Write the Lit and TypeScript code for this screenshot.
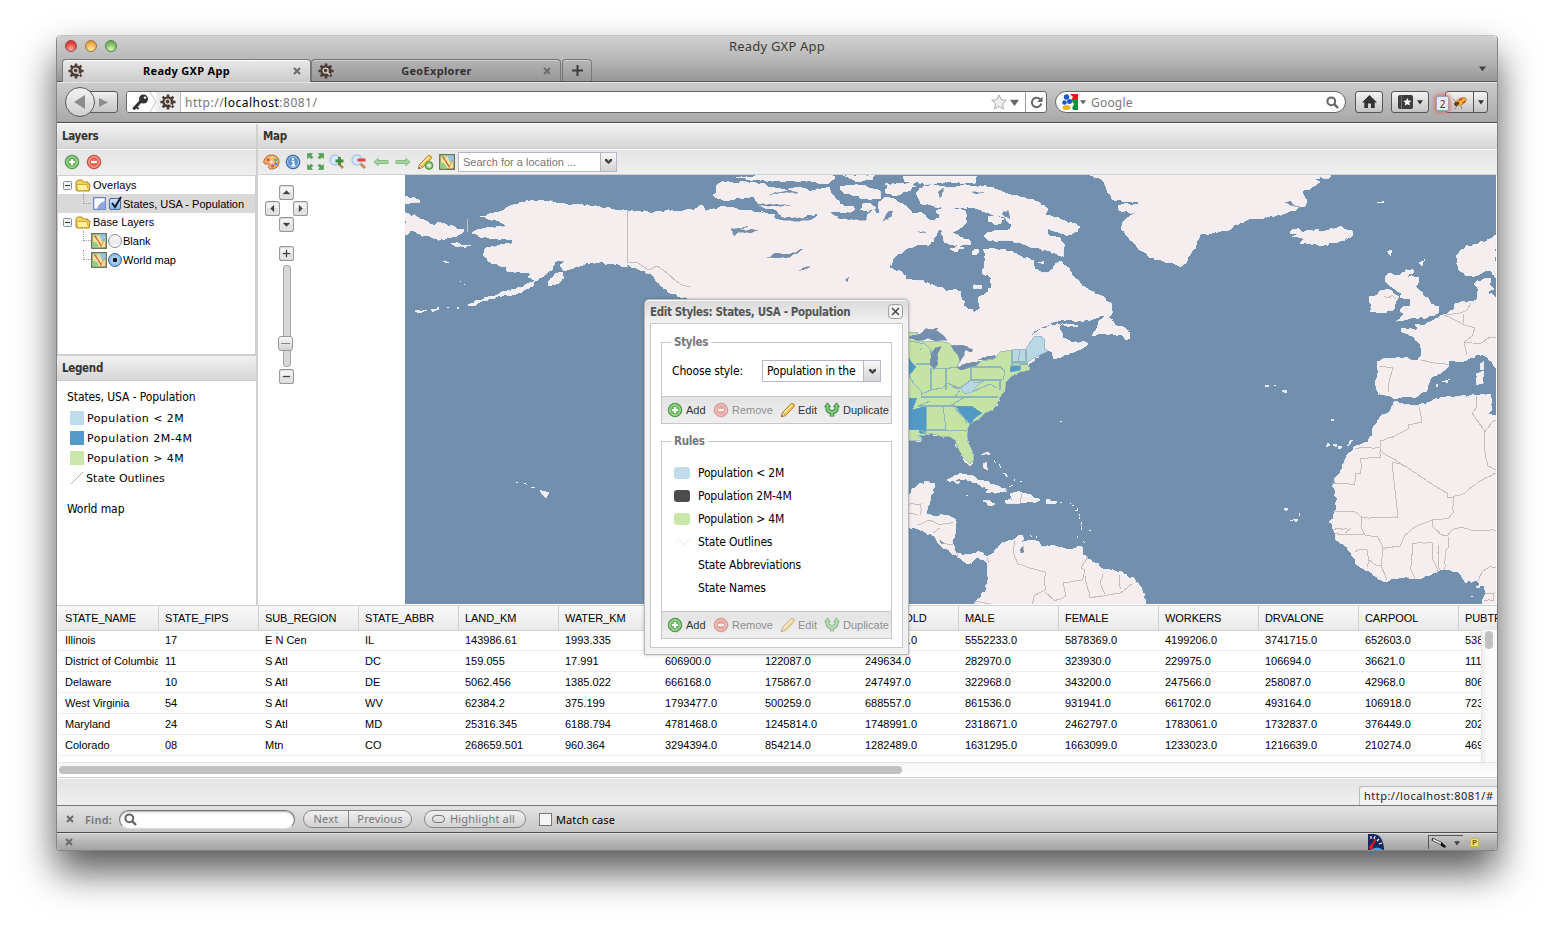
import { LitElement, html, css, svg, nothing } from "lit";
import { customElement } from "lit/decorators.js";

/* ---------- map geometry ---------- */

const LAND: string[] = [
  "405,197 419,200 420,202 405,203",
  "405,212 417,217 428,222 434,227 437,223 447,225 455,227 464,230 457,236 448,237 444,240 433,238 420,234 410,231 405,235",
  "451,243 460,244 471,246 465,248 455,246",
  "443,261 449,262 447,263",
  "548,282 555,274 563,272 564,278 556,284 549,286",
  "415,311 424,310 427,311 418,313", "431,310 438,307 439,309 432,311", "447,308 449,307", "457,307 459,307 458,309", "460,281 461,282", "464,284 465,285",
  "468,305 475,301 488,297 500,293 520,288 535,281 533,286 520,293 500,296 482,301 470,306",
  // North America mainland
  "480,217 492,214 505,209 510,206 522,202 534,201 550,201 565,204 580,205 600,207 615,210 627,211 640,211 653,213 665,211 680,211 695,209 700,205 707,211 718,208 724,206 735,209 750,211 763,213 775,214 775,219 800,219 812,220 822,213 832,214 838,217 850,218 866,220 868,214 872,211 880,213 879,202 885,197 893,198 900,203 906,206 912,213 921,212 928,219 934,221 940,217 936,211 945,207 955,209 965,211 967,221 960,228 955,231 950,231 960,237 970,241 970,245 955,246 945,243 943,236 940,229 936,236 930,244 915,246 905,250 895,257 890,268 902,272 906,280 920,281 935,286 945,290 960,291 962,300 966,307 974,313 981,308 978,298 988,292 992,285 990,277 982,273 985,265 986,255 983,249 1000,250 1012,251 1022,257 1034,260 1035,269 1045,273 1053,269 1057,263 1061,261 1070,271 1078,280 1085,287 1095,294 1105,298 1112,305 1112,313 1100,316 1083,322 1070,320 1058,321 1050,324 1042,327 1034,331 1030,336 1040,330 1052,325 1062,324 1060,330 1062,338 1072,343 1085,342 1088,344 1080,350 1070,353 1060,358 1054,359 1053,352 1048,350 1042,353 1035,358 1028,365 1030,370 1020,372 1012,376 1006,382 1005,390 1000,397 998,402 993,410 985,413 980,418 970,424 967,430 967,440 972,450 974,460 970,466 963,457 958,448 955,440 948,436 940,436 930,433 925,435 918,436 922,440 908,441 860,445 700,445 700,310 692,299 680,297 668,292 660,285 652,275 640,270 630,266 615,265 600,262 585,264 570,269 563,270 560,265 568,259 555,262 552,270 545,275 535,281 528,277 532,272 520,272 507,271 507,266 500,266 490,262 483,255 487,247 497,246 512,243 513,239 492,239 480,237 472,233 482,229 490,228 508,227 500,222 490,219",
  "1092,335 1098,325 1105,315 1113,312 1108,317 1113,321 1115,325 1125,328 1129,332 1130,338 1126,340 1122,335 1110,334",
  "1062,323 1072,324 1078,326 1070,326",
  "1075,343 1084,341 1088,344 1082,347 1076,346",
  // Arctic archipelago
  "714,196 716,188 720,183 740,182 760,184 775,188 785,190 800,187 812,192 813,198 812,190 830,188 833,195 840,204 855,209 850,213 838,211 828,214 815,214 800,218 783,217 776,210 765,208 758,203 752,196 745,197 740,198 728,201",
  "736,177 765,176 790,179 780,181 750,180",
  "760,175 830,175 835,177 828,184 812,182 795,181 775,179",
  "840,186 850,185 863,186 880,191 880,199 870,200 850,194 843,192",
  "843,175 875,175 872,180 855,181",
  "903,176 977,176 976,182 930,183 905,182",
  "885,184 912,184 916,187 905,191 895,196 885,192 888,188",
  "862,205 870,203 876,208 868,212 860,210",
  "917,192 920,188 930,185 945,187 960,186 975,186 990,187 1005,193 1020,197 1035,201 1048,209 1045,214 1060,219 1080,227 1077,232 1067,236 1058,232 1047,229 1048,234 1060,238 1064,244 1062,257 1050,251 1035,248 1020,242 1005,240 990,241 984,236 990,232 1003,230 1010,229 1012,224 1006,219 1015,221 1002,217 985,212 975,208 955,208 935,207 920,203",
  "950,249 960,247 964,248 955,252", "972,252 978,249 978,253 973,255", "973,286 981,285 981,289 974,289",
  "988,217 996,214 1004,219 998,224 989,222", "1038,262 1044,261 1043,264",
  // Greenland
  "1090,175 1103,181 1107,190 1112,199 1117,200 1138,202 1138,205 1125,203 1118,206 1119,210 1128,212 1137,214 1130,216 1123,222 1122,230 1130,240 1142,251 1155,260 1170,262 1180,267 1184,264 1190,255 1196,245 1200,235 1212,233 1225,231 1240,222 1255,219 1275,216 1290,211 1305,206 1307,200 1303,191 1312,187 1320,182 1313,178 1330,177 1330,175",
  "1290,232 1298,228 1302,232 1310,230 1325,231 1342,227 1352,231 1353,235 1345,240 1335,243 1322,246 1310,243 1300,243 1306,238 1292,237 1297,235",
  "1377,203 1384,201 1383,203", "1387,251 1392,250 1391,256", "1419,263 1425,259 1422,266",
  "1386,282 1386,276 1391,273 1395,276 1405,272 1412,269 1414,271 1407,277 1419,277 1415,286 1422,292 1428,298 1431,304 1439,306 1438,313 1428,317 1416,318 1405,319 1396,322 1404,314 1400,311 1403,307 1410,306 1410,299 1400,298 1402,293 1396,290 1388,284",
  "1369,297 1375,296 1380,291 1390,290 1398,296 1395,304 1393,310 1380,313 1370,312 1372,305",
  "1496,235 1487,241 1475,244 1462,249 1457,255 1458,268 1465,275 1475,276 1485,271 1492,272 1496,278",
  // continental Europe
  "1475,283 1484,279 1491,279 1489,285 1494,289 1488,292 1496,298 1496,368 1488,358 1478,354 1467,360 1460,361 1449,361 1448,367 1438,374 1430,380 1427,390 1418,396 1402,397 1396,399 1390,396 1378,395 1375,385 1379,372 1377,361 1385,358 1400,358 1418,360 1421,356 1421,345 1412,336 1402,332 1401,329 1418,329 1415,325 1425,325 1435,319 1443,315 1453,310 1456,303 1465,302 1478,299 1478,291",
  "1480,364 1484,361 1483,370 1480,369", "1476,374 1484,371 1483,383 1477,385", "1442,381 1450,379 1447,383", "1436,385 1438,384 1437,387",
  // Africa
  "1394,402 1400,404 1410,405 1418,406 1430,402 1440,398 1455,397 1475,396 1490,394 1492,400 1492,410 1488,414 1496,416 1496,604 1483,604 1485,590 1477,581 1465,582 1458,572 1450,570 1440,570 1430,575 1418,579 1405,577 1393,578 1385,582 1370,572 1355,563 1352,553 1345,546 1336,540 1334,531 1333,525 1329,522 1335,513 1337,500 1335,490 1332,486 1340,471 1345,463 1347,455 1353,450 1358,445 1368,442 1373,435 1373,428 1380,417 1390,411",
  "1326,447 1328,443 1330,445", "1333,445 1336,444 1336,447", "1338,446 1342,447 1339,449", "1347,446 1350,441 1353,440 1350,444", "1331,420 1334,419 1333,421",
  "1265,386 1269,385 1268,387", "1274,385 1276,386", "1282,391 1286,390 1286,393", "1284,508 1288,509 1286,511", "1290,521 1293,520", "1293,519 1298,519 1296,522", "1299,513 1300,516", "1476,587 1480,585 1479,588", "1471,596 1473,597",
  // Caribbean and the south
  "947,480 955,475 965,474 975,477 985,482 995,485 1007,491 1000,492 986,493 990,489 980,485 970,480 960,479 950,482",
  "955,482 960,482 957,484",
  "1005,500 1013,501 1010,494 1020,492 1030,494 1040,500 1035,503 1020,503 1006,503",
  "1046,500 1057,501 1055,504 1046,503", "983,501 990,501 995,504 988,505",
  "981,455 986,452 990,455 987,454", "983,464 986,462 988,470 984,468", "994,460 996,463", "999,464 1001,468", "1003,473 1008,477", "1009,487 1013,485", "1014,479 1015,481", "1020,481 1022,482",
  "1060,503 1062,502", "1070,503 1071,504", "1072,505 1074,506", "1075,511 1078,510", "1077,508 1078,511", "1079,514 1080,516", "1079,517 1080,519", "1081,522 1082,525", "1081,526 1082,530", "1077,536 1078,538", "1089,530 1091,531", "1083,541 1085,543",
  "1030,535 1032,537", "1036,536 1037,538", "966,495 968,496",
  "1060,421 1062,422", "516,482 518,483", "524,483 527,485", "531,487 535,487", "540,490 549,493 546,498 542,494",
  "908,500 912,489 920,483 934,483 935,487 930,497 927,510 926,514 935,517 945,515 955,519 955,530 952,542 957,554 968,555 980,552 988,557 995,550 1000,545 1010,540 1022,535 1024,538 1017,545 1025,541 1030,540 1036,541 1042,547 1055,546 1070,549 1082,547 1083,555 1095,563 1105,570 1122,572 1135,580 1142,590 1146,600 1145,604 974,604 985,592 988,580 988,568 985,561 978,557 970,564 958,557 950,552 940,545 935,537 920,530 908,527 890,515 880,490",
];

const WATER: string[] = [
  "908,337 920,334 925,329 937,331 945,337 947,341 935,341 928,338 918,341",
  "941,346 935,348 931,355 930,365 934,369 938,364 937,355",
  "951,346 960,345 965,346 972,349 972,352 965,350 964,356 960,362 957,354",
  "957,367 965,364 980,361 975,366 962,370",
  "978,359 995,355 995,358 982,360",
  "731,229 742,229 748,226 740,230 758,230 750,233 738,232 734,236",
  "767,258 775,253 790,254 803,249 790,257 775,258",
  "799,271 810,267 803,268", "845,280 849,277 848,282", "883,221 888,212 893,211 892,216",
  "837,217 850,215 866,217 866,220 842,219", "774,217 790,218 812,219 800,221 783,220",
  "927,330 938,328 936,331", "1285,202 1290,201 1294,206 1303,207 1290,205",
  "1020,549 1023,546 1024,552 1021,553", "920,350 922,348", "940,540 944,543 941,543",
  "938,192 944,188 940,198", "972,192 984,193 976,194", "848,213 858,210 864,213 856,217",
  "1002,214 1008,210 1010,219 1004,216", "755,204 790,205 770,206", "770,194 790,190 798,193 792,192", "918,231 926,233 920,233",
];

const BORDERS: string[] = [
  "627,210 627,262 637,262 648,270 657,266 667,273 680,284 690,287",
  "1332,484 1355,484 1355,474 1361,473 1361,458 1380,458 1380,448 1355,448",
  "1380,448 1380,441 1395,436 1408,429 1408,425 1422,422 1419,407",
  "1380,451 1400,463 1435,486 1447,493 1448,498 1463,494 1478,482 1496,473",
  "1400,463 1392,463 1398,517 1363,518 1355,512 1345,511 1335,512",
  "1453,497 1453,513 1449,518 1432,520 1415,527 1405,535 1400,546 1383,548",
  "1432,520 1433,527 1440,534 1447,536 1452,530 1460,527 1475,531 1496,530",
  "1449,537 1449,545 1445,553 1445,570", "1432,543 1413,543 1411,570 1415,579", "1432,543 1433,560 1438,571", "1438,545 1439,570",
  "1383,548 1381,565 1387,580", "1361,518 1361,527 1365,535 1378,537 1383,548", "1333,529 1350,529 1345,533", "1335,534 1363,535",
  "1355,552 1360,549 1367,550 1369,560 1376,565 1382,566", "1369,560 1367,567",
  "1476,396 1476,408 1472,413 1484,430 1485,455 1488,466 1496,470", "1484,433 1492,422 1496,420",
  "1478,581 1482,572 1490,566 1496,568", "1485,593 1494,593 1494,600 1484,600",
  "1379,366 1393,368 1390,378 1388,392", "1421,360 1435,363 1448,364", "1444,315 1455,320 1465,325 1475,328 1472,336 1464,342 1467,355", "1447,315 1460,313 1467,310 1471,303", "1464,342 1480,344 1490,337 1496,337", "1463,314 1464,323", "1384,296 1388,298 1392,295 1396,299",
  "1015,541 1013,552 1018,564 1030,568 1045,572 1045,590 1035,595 1032,604", "1045,592 1055,601 1066,596 1063,583 1082,580 1085,570 1081,568 1088,557", "1085,576 1090,598 1108,595 1120,593 1132,584", "1103,574 1100,583 1105,594", "1120,575 1120,590",
  "1021,494 1021,503", "908,504 921,504 921,515", "908,514 918,514", "918,525 930,520 940,525 953,522", "933,533 940,528", "941,543 953,545", "957,552 957,558", "987,558 989,563", "974,601 990,604",
];

const STATE_LINES: string[] = [
  "916,364 931,364", "931,368 931,390", "946,368 946,390", "933,369 950,368 972,367", "971,367 971,380 1002,380",
  "971,367 1001,367 1005,372 1003,380", "1012,350 1012,366 1027,364", "1020,350 1018,362", "1012,362 1026,362", "1026,350 1026,364",
  "908,374 914,384 921,391 922,396", "922,394 931,390 942,388 948,383 955,388 960,388", "946,383 960,388 971,380",
  "960,390 955,397", "921,397 998,397", "918,406 950,406 956,406", "950,406 965,397", "927,406 926,433", "943,406 946,430", "926,430 946,430 966,431",
  "921,430 926,434", "972,392 983,387 990,384 997,388", "983,381 1000,380 1000,390", "910,341 925,344 931,350 931,355", "953,406 965,419 967,424", "930,401 918,406",
];

const EAST =
  "880,332 908,332 918,333 910,338 925,342 938,341 948,343 953,346 957,354 961,359 957,367 965,369 975,366 982,361 994,359 1000,352 1012,350 1026,350 1027,362 1030,370 1020,372 1012,376 1006,382 1005,390 1000,397 998,402 993,410 985,413 980,418 970,424 967,430 967,440 972,450 974,460 970,464 963,457 958,448 955,440 948,436 940,436 930,433 925,435 918,436 922,440 880,441";

const PALE = [
  "1012,350 1026,349 1030,342 1034,337 1041,336 1044,339 1045,349 1048,351 1040,355 1032,359 1026,363 1012,363",
  "960,388 965,384 972,380 975,383 983,381 977,386 972,392 965,394",
];

const BLUE = [
  "1011,366 1021,366 1020,370 1010,372",
  "956,406 971,406 982,413 975,418 970,424 965,418 960,412",
  "900,399 917,398 912,410 927,406 926,433 920,433 919,430 900,429",
  "900,355 909,358 911,362 916,367 910,374 900,374",
];

type Pt = [number, number];

const toPoints = (s: string): Pt[] =>
  s.split(" ").map((p) => p.split(",").map(Number) as Pt);

/** Breaks straight coast segments into a ragged, repeatable shoreline. */
function coast(src: string, closed = true, amount = 1.3): string {
  const pts = toPoints(src);
  let seed = pts[0][0] * 31 + pts[0][1] * 17;
  const rnd = () => {
    seed = (seed * 1103515245 + 12345) % 2147483648;
    return seed / 2147483648 - 0.5;
  };
  const out: Pt[] = [];
  const n = closed ? pts.length : pts.length - 1;
  for (let i = 0; i < n; i++) {
    const a = pts[i];
    const b = pts[(i + 1) % pts.length];
    out.push(a);
    const len = Math.hypot(b[0] - a[0], b[1] - a[1]);
    if (len > 50) continue;
    const steps = Math.floor(len / 2.4);
    for (let k = 1; k < steps; k++) {
      const t = k / steps;
      out.push([
        a[0] + (b[0] - a[0]) * t + rnd() * amount * 2,
        a[1] + (b[1] - a[1]) * t + rnd() * amount * 2,
      ]);
    }
  }
  if (!closed) out.push(pts[pts.length - 1]);
  return (
    "M" + out.map((p) => p[0].toFixed(1) + " " + p[1].toFixed(1)).join("L") + (closed ? "Z" : "")
  );
}

const plain = (s: string, closed = true) => "M" + s.replace(/ /g, "L") + (closed ? "Z" : "");

@customElement("world-map")
class WorldMap extends LitElement {
  static styles = css`
    :host { display: block; }
    svg { display: block; width: 100%; height: 100%; }
    .sea { fill: #7290ad; }
    .land { fill: #f6edee; stroke: #eef2fa; stroke-width: 0.9; }
    .lake { fill: #7290ad; stroke: #7f93aa; stroke-width: 0.5; }
    .border { fill: none; stroke: #c9bcbf; stroke-width: 1; }
    .green { fill: #c4e3a4; stroke: #90b5b0; stroke-width: 0.8; }
    .pale { fill: #bad7e6; stroke: #8db2cd; stroke-width: 0.8; }
    .blue { fill: #5299c6; stroke: #5f9fc8; stroke-width: 0.8; }
    .line { fill: none; stroke: #8fb6bb; stroke-width: 1.1; }
  `;
  render() {
    return html`<svg viewBox="405 175 1091 429" preserveAspectRatio="none" shape-rendering="crispEdges">
      <rect class="sea" x="405" y="175" width="1092" height="430"></rect>
      ${LAND.map((l) => svg`<path class="land" d=${coast(l)}></path>`)}
      <path class="border" d="M467 219V232" stroke-width="2"></path>
      ${BORDERS.map((l) => svg`<path class="border" d=${coast(l, false, 0.35)}></path>`)}
      <path class="green" d=${plain(EAST)}></path>
      ${PALE.map((l) => svg`<path class="pale" d=${plain(l)}></path>`)}
      ${BLUE.map((l) => svg`<path class="blue" d=${plain(l)}></path>`)}
      ${STATE_LINES.map((l) => svg`<path class="line" d=${plain(l, false)}></path>`)}
      ${WATER.map((l) => svg`<path class="lake" d=${coast(l, true, 0.7)}></path>`)}
    </svg>`;
  }
}

/* ---------- icons ---------- */

const frame = (w: number, h: number, body: unknown) =>
  html`<svg class="ico" width=${w} height=${h} viewBox="0 0 ${w} ${h}">${body}</svg>`;

const add = () => frame(16, 16, svg`
  <circle cx="8" cy="8" r="6.8" fill="#4ea24b" stroke="#3f8a3d" stroke-width=".8"/>
  <circle cx="8" cy="8" r="5.3" fill="#69bb5c" stroke="#cdeac8" stroke-width=".9"/>
  <path d="M8 5v6M5 8h6" stroke="#fff" stroke-width="2.2"/>`);
const remove = () => frame(16, 16, svg`
  <circle cx="8" cy="8" r="6.8" fill="#d9453a" stroke="#c63c33" stroke-width=".8"/>
  <circle cx="8" cy="8" r="5.3" fill="#ea6355" stroke="#f8c9c3" stroke-width=".9"/>
  <path d="M5 8h6" stroke="#fff" stroke-width="2.2"/>`);
const pencil = (plus = false) => frame(17, 16, svg`
  <path d="M1.5 14.5l1-4L11 1.8q1.3-1 2.7.2 1.300 1.200.3 2.700L5.500 13.500z" fill="#f5c44c" stroke="#b57b22"/>
  <path d="M4 11l8-8" stroke="#fdeea8" stroke-width="1.600"/>
  <path d="M1.500 14.500l1-4 3 3z" fill="#f7e3c4" stroke="#b98a4a" stroke-width=".7"/>
  <path d="M1.200 14.800l.6-2 1.400 1.400z" fill="#4a3a22"/>
  ${plus ? svg`<circle cx="12" cy="11.500" r="3.900" fill="#8cc86a" stroke="#4c8f3a"/><path d="M12 9.500v4M10 11.500h4" stroke="#fff" stroke-width="1.400"/>` : nothing}`);
const fork = () => frame(16, 16, svg`
  <path d="M8 14.500V11" stroke="#3d9148" stroke-width="4.400"/>
  <path d="M3.500 4v2.500q0 3.500 4.500 3.500t4.500-3.500V4" fill="none" stroke="#3d9148" stroke-width="4.200"/>
  <path d="M.5 4.800L3.500.8l3 4zM9.500 4.800l3-4 3 4z" fill="#5fb45f" stroke="#3d9148" stroke-width=".8"/>
  <path d="M8 14V10.500M3.500 3v3.500q0 3.500 4.500 3.500t4.500-3.500V3" fill="none" stroke="#86cc7e" stroke-width="2"/>`);
const palette = () => frame(17, 16, svg`
  <path d="M8.500 1C13 .8 16 3.800 16 8c0 4-3 7-7.500 7-3.500 0-3.600-2.300-2.500-3.500S4.500 9.500 3 10C.8 10.300.3 8 1.200 6 2.500 2.700 5.300 1.100 8.500 1z" fill="#efb07a" stroke="#b5622d"/>
  <circle cx="5" cy="5.800" r="1.600" fill="#e9553f"/><circle cx="9" cy="4" r="1.500" fill="#f3dd51"/><circle cx="12.700" cy="6" r="1.500" fill="#5cb85a"/><circle cx="13" cy="10" r="1.600" fill="#4f8ed8"/><circle cx="9.500" cy="12" r="1.500" fill="#d6553c"/><circle cx="8.500" cy="8" r="1.300" fill="#fff4e2"/>`);
const info = () => frame(16, 16, svg`
  <circle cx="8" cy="8" r="6.900" fill="#4679b9" stroke="#2d5c9c" stroke-width=".8"/>
  <circle cx="8" cy="8" r="5.500" fill="#5f93cf" stroke="#b9d2ee" stroke-width=".9"/>
  <path d="M8 4v2M6.500 7.500H8.600v4M6.300 11.700h4" stroke="#fff" stroke-width="1.700" fill="none"/>`);
const extent = () => frame(17, 17, svg`
  <g fill="#52a552" stroke="#3f8b41" stroke-width=".5"><path d="M.5.500h5L4 2.200l2 2L4.300 5.900l-2-2L.5 5.500z"/><path d="M16.500.500v5L14.800 4l-2 2L11 4.300l2-2L11.500.500z"/><path d="M.5 16.500v-5L2.200 13l2-2L6 12.700l-2 2 1.500 1.800z"/><path d="M16.500 16.500h-5l1.500-1.800-2-2L12.700 11l2 2 1.800-1.500z"/></g>`);
const zoomIcon = (plus: boolean) => frame(16, 16, svg`
  <path d="M9.500 9.500l4.500 4.500" stroke="#c78a4b" stroke-width="2.600"/>
  <circle cx="6" cy="6" r="5" fill="#d8e9fb" stroke="#a9c6ea" stroke-width="1.300"/>
  ${plus ? svg`<path d="M10.500 3v8M6.500 7h8" stroke="#3c8c3c" stroke-width="2.800"/>` : svg`<path d="M6.500 6h8" stroke="#e8433f" stroke-width="3"/>`}`);
const arrow = (left: boolean) => frame(16, 16, svg`
  <path transform=${left ? "" : "matrix(-1 0 0 1 16 0)"} d="M1 8l4.200-3.500v2H15v3H5.200v2z" fill="#a6d3a1" stroke="#7fb47d" stroke-width=".9"/>`);
const mapIcon = () => frame(16, 16, svg`
  <rect x=".8" y=".8" width="14.400" height="14.400" fill="#f3e396" stroke="#5c6a4e" stroke-width="1.400"/>
  <path d="M8 1.500h6.500v7L11 8z" fill="#8fc7ec"/><path d="M1.500 8L6 10l2 4.500H1.500z" fill="#93cc8a"/><path d="M1.500 3l3-1.500h4l-3 4z" fill="#b8d8a0"/>
  <path d="M3.500 2.500l3.500 5 3.500 6" stroke="#d64b36" stroke-width="1.200" fill="none"/><path d="M10 13l3.500-7" stroke="#e0993f"/>`);
const folder = () => frame(16, 13, svg`
  <path d="M1 11V3l1.500-2H7l1.500 2H13v2h2l-.8 7H2.300z" fill="#f3d35f" stroke="#b48a1e"/>
  <path d="M2.500 11.500L1.600 5.500H12l1.500 6z" fill="#fdf0a2" stroke="#c79d2c" stroke-width=".8"/>`);
const gear = () => frame(16, 16, svg`
  <g stroke="#4b3c35" stroke-width="2.600"><path d="M8 .4v15.200M.4 8h15.200M2.600 2.600l10.800 10.800M13.400 2.600L2.600 13.400"/></g>
  <circle cx="8" cy="8" r="5.700" fill="#4b3c35"/><circle cx="7.600" cy="7.600" r="2.500" fill="none" stroke="#d8cfca" stroke-width="1.400"/><path d="M9.500 9.500l2.500 2.500" stroke="#d8cfca" stroke-width="1.600"/>`);
const cross = () => frame(8, 8, svg`<path d="M1 1l6 6M7 1L1 7" stroke="#6b6b6b" stroke-width="2"/>`);
const tri = (w: number, c: string) => html`<svg class="ico" width=${w} height=${w} viewBox="0 0 10 10"><path d="M0 2h10L5 9z" fill=${c}/></svg>`;
const magnifier = () => frame(13, 13, svg`<circle cx="5.300" cy="5.300" r="3.900" fill="none" stroke="#666" stroke-width="2"/><path d="M8.200 8.200L12 12" stroke="#666" stroke-width="2.400"/>`);
const nudge = (d: string) => frame(15, 15, svg`<rect x=".6" y=".6" width="13.800" height="13.800" rx="2" fill="#f4f4f4" stroke="#969696" stroke-width="1.100"/><rect x="2" y="7" width="11" height="6" fill="#e2e2e2"/><path d=${d} fill="#444" stroke="#444" stroke-width=".3"/>`);

/* ---------- data ---------- */

const COLUMNS = ["STATE_NAME", "STATE_FIPS", "SUB_REGION", "STATE_ABBR", "LAND_KM", "WATER_KM", "PERSONS", "FAMILIES", "HOUSHOLD", "MALE", "FEMALE", "WORKERS", "DRVALONE", "CARPOOL", "PUBTRANS"];
const ROWS = [
  ["Illinois", "17", "E N Cen", "IL", "143986.61", "1993.335", "11430602.0", "2924880.0", "4202240.0", "5552233.0", "5878369.0", "4199206.0", "3741715.0", "652603.0", "538071.0"],
  ["District of Columbia", "11", "S Atl", "DC", "159.055", "17.991", "606900.0", "122087.0", "249634.0", "282970.0", "323930.0", "229975.0", "106694.0", "36621.0", "111422.0"],
  ["Delaware", "10", "S Atl", "DE", "5062.456", "1385.022", "666168.0", "175867.0", "247497.0", "322968.0", "343200.0", "247566.0", "258087.0", "42968.0", "8069.0"],
  ["West Virginia", "54", "S Atl", "WV", "62384.2", "375.199", "1793477.0", "500259.0", "688557.0", "861536.0", "931941.0", "661702.0", "493164.0", "106918.0", "7237.0"],
  ["Maryland", "24", "S Atl", "MD", "25316.345", "6188.794", "4781468.0", "1245814.0", "1748991.0", "2318671.0", "2462797.0", "1783061.0", "1732837.0", "376449.0", "202169.0"],
  ["Colorado", "08", "Mtn", "CO", "268659.501", "960.364", "3294394.0", "854214.0", "1282489.0", "1631295.0", "1663099.0", "1233023.0", "1216639.0", "210274.0", "46983.0"],
];

@customElement("app-root")
class AppRoot extends LitElement {
  static styles = css`
    :host { display: block; width: 1554px; height: 929px; box-sizing: border-box; padding: 35px 56px 0; background: #fff; overflow: hidden; font: 11px/14px "Liberation Sans", Arial, sans-serif; color: #000; }
    * { box-sizing: border-box; }
    .ico { display: block; flex: none; }
    .grow { flex: 1; }
    .win { position: relative; width: 1442px; height: 816px; display: flex; flex-direction: column; border-radius: 5px 5px 4px 4px; border: 1px solid #848484; border-top-color: #c4c4c4; box-shadow: 0 21px 38px rgba(0,0,0,.66); background: #eee; }
    .lucida { font-family: "Noto Sans", "Open Sans", sans-serif; }
    .tahoma { font-family: "DejaVu Sans Condensed", "DejaVu Sans", sans-serif; font-stretch: condensed; }

    .top { height: 46px; flex: none; background: linear-gradient(#d0d0d0, #b9b9b9 50%, #979797); border-bottom: 1px solid #555; border-radius: 5px 5px 0 0; display: flex; flex-direction: column; }
    .title { height: 23px; padding-bottom: 4px; display: grid; grid-template-columns: 1fr auto 1fr; align-items: center; }
    .lights { display: flex; gap: 8px; padding-left: 8px; }
    .light { width: 12px; height: 12px; border-radius: 50%; border: 1px solid; }
    .red { background: radial-gradient(circle at 50% 85%, #ffb4ad, #e8443f 60%, #c5312d); border-color: #a3433f; }
    .amber { background: radial-gradient(circle at 50% 85%, #ffefb0, #f0b04a 60%, #c98a3a); border-color: #a5743c; }
    .lime { background: radial-gradient(circle at 50% 85%, #d9f8c4, #7fbd68 60%, #5f964e); border-color: #56834c; }
    .name { font-size: 13px; color: #3b3b3b; letter-spacing: .2px; }
    .tabs { flex: 1; display: flex; padding-left: 5px; align-items: stretch; }
    .tab { width: 250px; display: flex; align-items: center; padding: 1px 9px 0 6px; border: 1px solid #777; border-bottom: 0; border-radius: 4px 4px 0 0; font-weight: 700; font-size: 11px; color: #333; letter-spacing: .3px; background: linear-gradient(#b4b4b4, #979797); box-shadow: inset 0 1px rgba(255,255,255,.35); }
    .tab.on { width: 249px; padding: 0 9px 0 5px; color: #000; background: linear-gradient(#e9e9e9, #cbcbcb); margin-bottom: -1px; box-shadow: inset 0 1px #fff; }
    .tab .label { flex: 1; text-align: center; padding-right: 4px; }
    .plus { width: 30px; margin-left: 1px; display: flex; align-items: center; justify-content: center; border: 1px solid #777; border-bottom: 0; border-radius: 4px 4px 0 0; box-shadow: inset 0 1px rgba(255,255,255,.35); }
    .tabmenu { margin: 6px 11px 0 auto; }

    .nav { height: 41px; flex: none; background: linear-gradient(#cbcbcb, #a8a8a8); border-top: 1px solid #e6e6e6; border-bottom: 1px solid #4d4d4d; display: flex; align-items: center; padding: 0 9px 1px 8px; }
    .back { width: 30px; height: 30px; border-radius: 50%; border: 1px solid #5a5a5a; background: linear-gradient(#f4f4f4, #cfcfcf); display: flex; align-items: center; justify-content: center; z-index: 1; }
    .fwd { width: 30px; height: 22px; margin-left: -7px; border: 1px solid #5a5a5a; border-radius: 0 3px 3px 0; background: linear-gradient(#efefef, #c4c4c4); display: flex; align-items: center; justify-content: center; }
    .url { width: 921px; height: 22px; margin-left: 8px; border: 1px solid #666; border-radius: 3px; background: #fff; display: flex; align-items: center; font-size: 12px; color: #777; }
    .url .dd { margin-left: 3px; }
    .ident { width: 54px; height: 20px; display: flex; align-items: center; padding-left: 5px; border-right: 1px solid #bbb; border-radius: 2px 0 0 2px; background: linear-gradient(90deg, #fff 27px, #ececec 31px); }
    .ident .chev { width: 11px; }
    .addr { flex: 1; padding: 2px 0 0 4px; letter-spacing: .5px; }
    .addr b { font-weight: 400; color: #000; }
    .reload { width: 21px; height: 20px; margin-left: 6px; border-left: 1px solid #999; display: flex; align-items: center; justify-content: center; }
    .search { width: 291px; height: 22px; margin-left: 8px; border: 1px solid #666; border-radius: 11px; background: #fff; display: flex; align-items: center; padding: 0 6px 0 6px; font-size: 12px; color: #777; letter-spacing: .2px; }
    .search .dd { margin-left: 2px; }
    .search .grow { padding: 2px 0 0 5px; }
    .btn { height: 22px; border: 1px solid #555; border-radius: 3px; background: linear-gradient(#f3f3f3, #c3c3c3); display: flex; align-items: center; justify-content: center; gap: 4px; }
    .home { width: 28px; margin-left: 9px; }
    .marks { width: 38px; margin-left: 8px; }
    .bug { width: 43px; margin-left: 16px; padding: 0 0 0 6px; justify-content: space-between; position: relative; }
    .bug .drop { border-left: 1px solid #555; height: 20px; width: 14px; display: flex; align-items: center; justify-content: center; }
    .badge { position: absolute; left: -10px; top: 4px; width: 13px; height: 15px; background: #e6ecf6; border: 1px solid #9aa3b5; border-radius: 2px; color: #b0000f; font-size: 10px; line-height: 14px; text-align: center; box-shadow: 0 0 4px 1px #e0605a; }

    .main { height: 482px; flex: none; display: grid; grid-template-columns: 199px 1fr; column-gap: 2px; background: #d0d0d0; border-top: 1px solid #fff; }
    .col { display: flex; flex-direction: column; min-height: 0; }
    .head { height: 25px; flex: none; padding: 0 5px; line-height: 25px; font-size: 11.500px; letter-spacing: -.3px; font-weight: 700; color: #333; background: linear-gradient(#f1f1f1, #d6d6d6); border-bottom: 1px solid #cfcfcf; }
    .head.second { margin-top: 2px; }
    .bar { height: 27px; flex: none; display: flex; align-items: center; border-top: 1px solid #fff; border-bottom: 1px solid #d0d0d0; background: linear-gradient(#e4e4e4, #efefef); padding-bottom: 1px; }
    .lbar { gap: 6px; padding-left: 7px; }
    .tree { height: 178px; flex: none; background: #fff; margin: 0 1px; }
    .node { height: 19px; display: flex; align-items: center; }
    .node.root { height: 18px; padding-left: 5px; }
    .node.root .ico { margin-right: 3px; }
    .node.root span { margin-left: -1px; }
    .node.leaf { padding-left: 25px; }
    .node.sel { background: #d9d9d9; }
    .lic { width: 16px; margin-right: 1px; display: flex; justify-content: center; }
    .elbow { width: 8px; height: 10px; align-self: flex-start; border-left: 1px dotted #999; border-bottom: 1px dotted #999; }
    .radio { width: 14px; height: 14px; border-radius: 50%; border: 1px solid #8b8b8b; background: linear-gradient(#fff, #e8e8e8 60%, #fff); margin: 0 1px 0 0; }
    .radio.on { border-color: #41618f; background: radial-gradient(circle, #101c2c 0 2px, #b4d5f3 2.600px, #7db4e6 6px); }
    .check { width: 12px; height: 12px; border: 1px solid #4b6d98; border-radius: 2px; background: linear-gradient(#cfe3f7, #86b8e6); margin: 0 2px 0 1px; }
    .check svg { margin: -3px 0 0 0; overflow: visible; }
    .legend { flex: 1; background: #fff; padding: 8px 10px 0; display: flex; flex-direction: column; }
    .legend .ttl { font-size: 12px; letter-spacing: -.1px; height: 16px; line-height: 16px; margin-bottom: 3px; }
    .legend .ttl.second { margin-top: 13px; }
    .li { height: 20px; display: flex; align-items: center; gap: 3px; padding-left: 3px; font: 11px "DejaVu Sans", sans-serif; letter-spacing: .45px; }
    .li.tight { letter-spacing: .05px; gap: 2px; }
    .sw { width: 14px; height: 14px; }
    .c1 { background: #bfdcea; } .c2 { background: #539bc9; } .c3 { background: #c8e7a8; } .c4 { background: #4b4b4b; }

    .tools { padding: 0 0 1px 2px; height: 26px; }
    .cell { width: 22px; display: flex; justify-content: center; flex: none; }
    .combo { height: 20px; display: flex; border: 1px solid #b5b8c8; background: #fff; color: #777; line-height: 19px; }
    .combo.loc { width: 159px; padding-left: 4px; font-size: 11px; line-height: 19px; }
    .combo .t { flex: 1; white-space: nowrap; overflow: hidden; }
    .trig { width: 16px; background: linear-gradient(#f7f7f7, #d4d4d4); border-left: 1px solid #b8b8b8; display: flex; align-items: center; justify-content: center; }
    .mapbox { flex: 1; display: flex; background: #fff; }
    .ctl { width: 147px; padding: 10px 0 0 7px; display: flex; flex-direction: column; align-items: flex-start; }
    .ctl .n { margin-left: 14px; }
    .ctl .ew { display: flex; gap: 13px; margin: 1px 0 1px; }
    .ctl .in { margin-top: 14px; }
    .slide { display: flex; width: 15px; margin: 4px 0 4px 14px; padding-left: 4px; height: 100px; position: relative; }
    .slide::before { content: ""; width: 6px; height: 100px; border: 1px solid #a5a5a5; border-radius: 3px; background: #d8d8d8; }
    .thumb { position: absolute; top: 71px; left: -1px; width: 15px; height: 15px; border: 1px solid #999; border-radius: 3px; background: linear-gradient(#f8f8f8, #d2d2d2); display: flex; align-items: center; justify-content: center; }
    .thumb i { width: 9px; height: 1px; background: #888; }
    world-map { flex: 1; height: 429px; margin-right: 1px; }

    .grid { height: 173px; flex: none; background: #fff; border-top: 1px solid #d0d0d0; overflow: hidden; display: flex; flex-direction: column; padding-left: 1px; }
    .gh, .gr { display: flex; flex: none; width: 1500px; }
    .gh { height: 25px; background: linear-gradient(#f9f9f9, #e9e9e9); border-bottom: 1px solid #d0d0d0; margin-bottom: -1px; }
    .gh div, .gr div { width: 100px; flex: none; padding-left: 7px; white-space: nowrap; overflow: hidden; }
    .gh div { line-height: 25px; border-right: 1px solid #d0d0d0; letter-spacing: -.08px; }
    .gh div:first-child { width: 101px; } .gh div:nth-child(n+2) { padding-left: 6px; }
    .gr { height: 21px; border-bottom: 1px solid #ededed; line-height: 20px; }
    .gbody { display: flex; height: 133px; flex: none; border-bottom: 1px solid #e4e4e4; }
    .grows { width: 1423px; overflow: hidden; }
    .vs { flex: 1; background: linear-gradient(90deg, #eee, #fbfbfb 40%); border-left: 1px solid #e4e4e4; padding: 1px 0 0 3px; }
    .vs i { display: block; width: 8px; height: 18px; border-radius: 4px; background: #c1c1c1; }
    .hs { flex: 1; padding: 3px 1px 0; background: linear-gradient(#f5f5f5, #fefefe); border-bottom: 1px solid #cfcfcf; }
    .hs i { display: block; width: 843px; height: 8px; border-radius: 4px; background: #c1c1c1; }
    .strip { height: 27px; flex: none; background: linear-gradient(#e4e4e4, #eee); border-top: 1px solid #fff; display: flex; justify-content: flex-end; align-items: flex-end; }
    .status { height: 19px; width: 138px; padding-left: 4px; border: 1px solid #bbb; border-width: 1px 0 0 1px; border-radius: 3px 0 0 0; background: #f2f2f2; font-size: 11px; line-height: 18px; letter-spacing: .48px; color: #222; white-space: nowrap; }
    .find { height: 28px; flex: none; border-top: 1px solid #777; border-bottom: 1px solid #4e4e4e; background: linear-gradient(#e3e3e3, #c6c6c6); display: flex; align-items: center; padding-left: 9px; font-size: 11px; color: #777; }
    .find b { margin: 1px 0 0 11px; font-weight: 600; letter-spacing: .2px; }
    .fbox { width: 176px; height: 19px; margin-left: 7px; border: 1px solid #777; border-bottom-color: #ddd; border-radius: 10px; background: #fff; padding-left: 4px; display: flex; align-items: center; box-shadow: inset 0 1px 2px #aaa; }
    .pill { height: 18px; border: 1px solid #888; border-radius: 9px; background: linear-gradient(#f1f1f1, #d2d2d2); display: flex; align-items: center; letter-spacing: .15px; }
    .pill.pair { width: 109px; margin-left: 8px; }
    .pill.pair span { line-height: 16px; text-align: center; }
    .pill.pair span:first-child { width: 45px; border-right: 1px solid #888; }
    .pill.pair span:last-child { flex: 1; }
    .pill.hl { width: 102px; margin-left: 12px; padding-left: 7px; gap: 5px; letter-spacing: .2px; }
    .oval { width: 13px; height: 8px; border: 1px solid #777; border-radius: 4px; }
    .box { width: 13px; height: 13px; border: 1px solid #777; background: #f5f5f5; margin: 0 4px 0 13px; }
    .match { color: #000; letter-spacing: .1px; padding-top: 1px; }
    .addon { flex: 1; min-height: 0; background: linear-gradient(#cbcbcb, #a3a3a3); border-top: 1px solid #ddd; border-radius: 0 0 4px 4px; display: flex; align-items: center; padding: 0 18px 0 8px; }
    .drop2 { width: 35px; height: 14px; margin: 0 7px 0 44px; border: 1px solid #555; border-width: 1px 0 0 1px; display: flex; align-items: center; justify-content: space-between; padding: 0 3px 0 2px; }
    .note { width: 9px; height: 9px; background: #efe06e; border: 1px solid #cbb84a; font-size: 7px; line-height: 8px; text-align: center; font-weight: 700; color: #665a14; }

    .dlg { position: absolute; left: 587px; top: 263px; width: 265px; height: 356px; border: 1px solid #b9b9b9; border-radius: 5px 5px 0 0; background: linear-gradient(#d9d9d9, #f1f1f1 22px); padding: 0 5px 6px; display: flex; flex-direction: column; box-shadow: inset 0 1px #fff, 0 0 3px rgba(0,0,0,.3); }
    .dt { height: 23px; flex: none; display: flex; align-items: center; justify-content: space-between; font-size: 11.500px; font-weight: 700; color: #555; letter-spacing: -.36px; }
    .db { flex: 1; background: #fff; border: 1px solid #c9c9c9; padding: 18px 10px 0; }
    .fs { border: 1px solid #c6c6c6; display: flex; flex-direction: column; width: 231px; }
    .fs .lg { align-self: flex-start; background: #fff; margin: -8px 0 0 9px; padding: 0 3px; height: 15px; line-height: 15px; font-size: 11.500px; font-weight: 700; letter-spacing: -.3px; color: #777; }
    .fs.one { height: 82px; } .fs.two { height: 198px; margin-top: 17px; }
    .fb { height: 27px; border-top: 1px solid #c6c6c6; background: linear-gradient(#e3e3e3, #efefef); display: flex; align-items: center; padding-left: 5px; flex: none; white-space: nowrap; color: #333; font-family: "Liberation Sans", Arial, sans-serif; font-stretch: normal; }
    .it { display: flex; align-items: center; gap: 3px; }
    .a { width: 46px; } .r { width: 67px; } .e { width: 44px; gap: 1px; }
    .off { opacity: .5; }
    .choose { flex: 1; display: flex; align-items: center; padding: 0 10px 4px; justify-content: space-between; font-size: 12px; letter-spacing: -.15px; }
    .choose .combo { width: 119px; height: 22px; padding-left: 4px; color: #000; line-height: 21px; }
    .choose .trig { width: 17px; }
    .rules { flex: 1; padding: 12px 0 0 12px; }
    .rule { height: 23px; display: flex; align-items: center; gap: 8px; font-size: 12px; letter-spacing: -.17px; }
    .rs { width: 16px; height: 12px; border-radius: 3px; }
  `;

  private chevron() {
    return frame(9, 7, svg`<path d="M1 1h2l1.500 2L6 1h2v2L4.500 6 1 3z" fill="#444"/>`);
  }

  private fbar(disabled: boolean) {
    const off = disabled ? "off" : "";
    return html`<div class="fb">
      <span class="it a">${add()}Add</span>
      <span class="it r off">${remove()}Remove</span>
      <span class="it e ${off}">${pencil()}Edit</span>
      <span class="it d ${off}">${fork()}Duplicate</span>
    </div>`;
  }

  private expander() {
    return frame(9, 9, svg`<rect x=".5" y=".5" width="8" height="8" rx="1" fill="#f2f2f2" stroke="#8391a8"/><path d="M2 4.500h5" stroke="#333"/>`);
  }

  render() {
    const tools = [palette(), info(), extent(), zoomIcon(true), zoomIcon(false), arrow(true), arrow(false), pencil(true), mapIcon()];
    return html`<div class="win">
      <div class="top lucida">
        <div class="title">
          <div class="lights"><span class="light red"></span><span class="light amber"></span><span class="light lime"></span></div>
          <span class="name">Ready GXP App</span><span></span>
        </div>
        <div class="tabs">
          <div class="tab on">${gear()}<span class="label">Ready GXP App</span>${cross()}</div>
          <div class="tab">${gear()}<span class="label">GeoExplorer</span>${cross()}</div>
          <div class="plus">${frame(11, 11, svg`<path d="M5.500 0v11M0 5.500h11" stroke="#3c3c3c" stroke-width="2"/>`)}</div>
          <div class="tabmenu">${tri(7, "#444")}</div>
        </div>
      </div>

      <div class="nav lucida">
        <div class="back">${frame(12, 14, svg`<path d="M11 0v14L0 7z" fill="#8c8c8c"/>`)}</div>
        <div class="fwd">${frame(9, 9, svg`<path d="M0 0v9l9-4.500z" fill="#8c8c8c"/>`)}</div>
        <div class="url">
          <div class="ident">
            ${frame(17, 17, svg`<circle cx="11.500" cy="5" r="4.500" fill="#333"/><circle cx="13" cy="3.600" r="1.200" fill="#fff"/><path d="M9 7l-7 7.500" stroke="#333" stroke-width="3"/><path d="M3.500 12l3 3M1 13.500l2 2" stroke="#333" stroke-width="2"/>`)}
            <span class="chev">${frame(8, 20, svg`<path d="M1 0l6 10-6 10" fill="none" stroke="#c4c4c4"/>`)}</span>
            ${gear()}
          </div>
          <span class="addr">http://<b>localhost</b>:8081/</span>
          ${frame(16, 16, svg`<path d="M8 1l2.200 4.700 5.100.6-3.800 3.500 1 5.100L8 12.400 3.500 14.900l1-5.100L.7 6.300l5.100-.6z" fill="#eee" stroke="#aaa"/>`)}
          <span class="dd">${tri(9, "#666")}</span>
          <div class="reload">${frame(13, 13, svg`<path d="M10 3.200A4.700 4.700 0 1 0 11.200 7.500" fill="none" stroke="#666" stroke-width="2"/><path d="M7 6h5.500V.5z" fill="#666"/>`)}</div>
        </div>
        <div class="search">
          ${frame(16, 16, svg`<rect x="7" width="9" height="6" fill="#e11"/><path d="M7 5h9v11h-5z" fill="#0a9440"/><path d="M0 0h8l3 3-2 3 3 4-3 6H0z" fill="#fff"/><circle cx="4.500" cy="3" r="2.700" fill="#1a56c8"/><circle cx="2.500" cy="8.500" r="2.300" fill="#1a56c8"/><circle cx="7.500" cy="7.500" r="2.500" fill="#1a56c8"/><ellipse cx="4.500" cy="13.500" rx="4" ry="2.500" fill="#efb41c"/>`)}
          <span class="dd">${tri(6, "#666")}</span>
          <span class="grow">Google</span>${magnifier()}
        </div>
        <div class="btn home">${frame(15, 14, svg`<path d="M7.500 0L15 7.500h-2.300V13H9V8.500H6V13H2.300V7.500H0z" fill="#333"/>`)}</div>
        <div class="btn marks">${frame(15, 14, svg`<rect width="15" height="14" rx="2" fill="#3d3d3d"/><path d="M3.500 0v14" stroke="#777"/><path d="M9.300 3l1.200 2.600 2.800.3-2.100 1.900.6 2.800-2.500-1.400-2.500 1.400.6-2.800-2.100-1.900 2.800-.3z" fill="#fff"/>`)}${tri(6, "#333")}</div>
        <div class="btn bug">
          <span class="badge">2</span>
          ${frame(16, 15, svg`<g transform="rotate(-28 8 7)"><ellipse cx="9" cy="7" rx="6" ry="3.200" fill="#f5b13a" stroke="#a86a27" stroke-width=".6"/><circle cx="3.500" cy="7" r="2" fill="#5a421f"/><path d="M8 5h4M10 9h3" stroke="#d6402a" stroke-width="1.500"/><path d="M6 5.500v3" stroke="#3f2f17" stroke-width="1.200"/></g><path d="M5 11l-2 3M9 11l1 3M1 4l3 3" stroke="#7d6a4c" stroke-width=".8"/>`)}
          <span class="drop">${tri(6, "#333")}</span>
        </div>
      </div>

      <div class="main">
        <div class="col">
          <div class="head tahoma">Layers</div>
          <div class="bar lbar">${add()}${remove()}</div>
          <div class="tree">
            <div class="node root">${this.expander()}${folder()}<span>Overlays</span></div>
            <div class="node leaf sel"><i class="elbow"></i>
              <span class="lic">${frame(13, 13, svg`<rect x=".7" y=".7" width="11.600" height="11.600" fill="#fff" stroke="#6a7fc0" stroke-width="1.200"/><path d="M4 12q1-6 8-8v8z" fill="#8fa8e0"/>`)}</span>
              <span class="check">${frame(12, 13, svg`<path d="M2 7l3 4 6-10" fill="none" stroke="#0d1c33" stroke-width="2"/>`)}</span><span>States, USA - Population</span></div>
            <div class="node root">${this.expander()}${folder()}<span>Base Layers</span></div>
            <div class="node leaf"><i class="elbow"></i><span class="lic">${mapIcon()}</span><span class="radio"></span><span>Blank</span></div>
            <div class="node leaf"><i class="elbow"></i><span class="lic">${mapIcon()}</span><span class="radio on"></span><span>World map</span></div>
          </div>
          <div class="head second tahoma">Legend</div>
          <div class="legend tahoma">
            <div class="ttl">States, USA - Population</div>
            <div class="li"><span class="sw c1"></span>Population &lt; 2M</div>
            <div class="li"><span class="sw c2"></span>Population 2M-4M</div>
            <div class="li"><span class="sw c3"></span>Population &gt; 4M</div>
            <div class="li tight">${frame(14, 14, svg`<path d="M1 13L13 1" stroke="#999" stroke-width=".8"/>`)}State Outlines</div>
            <div class="ttl second">World map</div>
          </div>
        </div>
        <div class="col">
          <div class="head tahoma">Map</div>
          <div class="bar tools">
            ${tools.map((t) => html`<span class="cell">${t}</span>`)}
            <div class="combo loc"><span class="t">Search for a location ...</span><span class="trig">${this.chevron()}</span></div>
          </div>
          <div class="mapbox">
            <div class="ctl">
              <span class="n">${nudge("M4 9h7L7.500 5.500z")}</span>
              <span class="ew">${nudge("M9 4v7L5.500 7.500z")}${nudge("M6 4v7l3.500-3.500z")}</span>
              <span class="n">${nudge("M4 6h7L7.500 9.500z")}</span>
              <span class="n in">${nudge("M7 4h1v3h3v1H8v3H7V8H4V7h3z")}</span>
              <div class="slide"><span class="thumb"><i></i></span></div>
              <span class="n">${nudge("M4 7h7v1H4z")}</span>
            </div>
            <world-map></world-map>
          </div>
        </div>
      </div>

      <div class="grid">
        <div class="gh">${COLUMNS.map((c) => html`<div>${c}</div>`)}</div>
        <div class="gbody">
          <div class="grows">${ROWS.map((r) => html`<div class="gr">${r.map((v) => html`<div>${v}</div>`)}</div>`)}</div>
          <div class="vs"><i></i></div>
        </div>
        <div class="hs"><i></i></div>
      </div>
      <div class="strip"><div class="status lucida">http://localhost:8081/#</div></div>

      <div class="find lucida">
        ${cross()}<b>Find:</b>
        <div class="fbox">${magnifier()}</div>
        <div class="pill pair"><span>Next</span><span>Previous</span></div>
        <div class="pill hl"><i class="oval"></i>Highlight all</div>
        <span class="box"></span><span class="match">Match case</span>
      </div>
      <div class="addon">
        ${cross()}<span class="grow"></span>
        ${frame(16, 16, svg`<path d="M0 0h6q9 1 10 15v1H0z" fill="#17285e"/><path d="M2 16q8-5 13 0z" fill="#4a9fe0"/><path d="M3 2v3M7 2l-1 3M11 5L9 7M14 9l-3 1" stroke="#fff" stroke-width="1.200"/><path d="M2 14L8 5" stroke="#e81c1c" stroke-width="1.800"/><circle cx="3" cy="13" r="2" fill="#e81c1c"/>`)}
        <div class="drop2">${frame(18, 12, svg`<path d="M1 2l10 5" stroke="#222" stroke-width="3"/><path d="M2 2.500l8 4" stroke="#eee" stroke-width="1.400"/><path d="M10 5l5 4-1 2-4-2z" fill="#111"/>`)}${tri(6, "#444")}</div>
        <span class="note">P</span>
      </div>

      <div class="dlg tahoma">
        <div class="dt"><span>Edit Styles: States, USA - Population</span>
          ${frame(15, 15, svg`<rect x=".6" y=".6" width="13.800" height="13.800" rx="3" fill="#f6f6f6" stroke="#999"/><path d="M4 4l7 7M11 4l-7 7" stroke="#444" stroke-width="1.500"/>`)}</div>
        <div class="db">
          <div class="fs one"><span class="lg">Styles</span>
            <div class="choose"><span>Choose style:</span>
              <div class="combo"><span class="t">Population in the</span><span class="trig">${this.chevron()}</span></div></div>
            ${this.fbar(false)}
          </div>
          <div class="fs two"><span class="lg">Rules</span>
            <div class="rules">
              <div class="rule"><span class="rs c1"></span>Population &lt; 2M</div>
              <div class="rule"><span class="rs c4"></span>Population 2M-4M</div>
              <div class="rule"><span class="rs c3"></span>Population &gt; 4M</div>
              <div class="rule">${frame(16, 12, svg`<path d="M0 8l5-5 5 6 6-6" fill="none" stroke="#e4efef"/>`)}State Outlines</div>
              <div class="rule"><span class="rs"></span>State Abbreviations</div>
              <div class="rule"><span class="rs"></span>State Names</div>
            </div>
            ${this.fbar(true)}
          </div>
        </div>
      </div>
    </div>`;
  }
}
